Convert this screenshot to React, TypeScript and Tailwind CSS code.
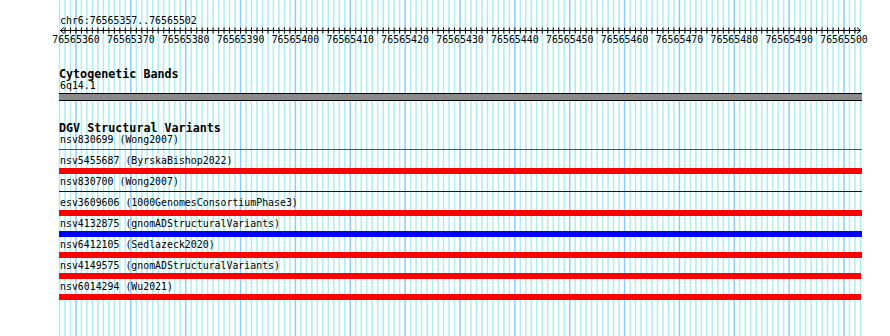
import React from "react";

const START = 76565357;
const COUNT = 146;
const X0 = 59.5;
const PX = 5.486;

const xAt = (k: number) => X0 + k * PX;

const features: { label: string; kind: "line" | "bar"; color: string; width: number }[] = [
  { label: "nsv830699 (Wong2007)", kind: "line", color: "#8b4513", width: 803 },
  { label: "nsv5455687 (ByrskaBishop2022)", kind: "bar", color: "#ff0000", width: 803 },
  { label: "nsv830700 (Wong2007)", kind: "line", color: "#0000b0", width: 803 },
  { label: "esv3609606 (1000GenomesConsortiumPhase3)", kind: "bar", color: "#ff0000", width: 803 },
  { label: "nsv4132875 (gnomADStructuralVariants)", kind: "bar", color: "#0000ff", width: 803 },
  { label: "nsv6412105 (Sedlazeck2020)", kind: "bar", color: "#ff0000", width: 803 },
  { label: "nsv4149575 (gnomADStructuralVariants)", kind: "bar", color: "#ff0000", width: 802 },
  { label: "nsv6014294 (Wu2021)", kind: "bar", color: "#ff0000", width: 802 },
];

const Grid: React.FC = () => {
  const lines = [];
  for (let k = 0; k <= COUNT; k++) {
    const major = (START + k) % 10 === 0;
    lines.push(
      <line
        key={k}
        x1={xAt(k)}
        x2={xAt(k)}
        y1={0}
        y2={336}
        stroke={major ? "#87cefa" : "#aeeeee"}
        strokeWidth={1.5}
      />
    );
  }
  return (
    <svg className="absolute inset-0" width={890} height={336}>
      {lines}
    </svg>
  );
};

const Ruler: React.FC = () => {
  const ticks = [];
  for (let k = 1; k < COUNT; k++) {
    ticks.push(<line key={k} x1={xAt(k)} x2={xAt(k)} y1={0.5} y2={6.5} />);
  }
  return (
    <svg width={890} height={7} className="block" stroke="black" strokeWidth={1} fill="none">
      <line x1={60} x2={861} y1={3.5} y2={3.5} />
      <polyline points="64,0.5 60.5,3.5 64,6.5" />
      <polyline points="857,0.5 860.5,3.5 857,6.5" />
      {ticks}
    </svg>
  );
};

export default function App() {
  const labels = [];
  for (let p = 76565360; p <= 76565500; p += 10) labels.push(p);

  return (
    <div className="relative w-[890px] h-[336px] bg-white overflow-hidden text-black font-['DejaVu_Sans_Mono',monospace]">
      <Grid />
      <div className="relative flex flex-col">
        <div className="mt-[15px] pl-[60px] h-[12px] leading-[12px] text-[9.9px]">chr6:76565357..76565502</div>
        <Ruler />
        <div className="flex pl-[48.57px] h-[12px] leading-[12px] text-[9.9px]">
          {labels.map((p) => (
            <div key={p} className="w-[54.86px] shrink-0 text-center">
              {p}
            </div>
          ))}
        </div>

        <div className="mt-[23px] pl-[59px] h-[11px] leading-[11px] text-[11.7px] font-bold">Cytogenetic Bands</div>
        <div className="pl-[60px] h-[11px] leading-[11px] text-[9.9px]">6q14.1</div>
        <div className="mt-[2px] ml-[59px] w-[803px] h-[8px] border-y border-black bg-[#8b8b8b]" />

        <div className="mt-[22px] pl-[59px] h-[11px] leading-[11px] text-[11.7px] font-bold">DGV Structural Variants</div>
        <div className="flex flex-col">
          {features.map((f) => (
            <div key={f.label} className="flex flex-col h-[21px] pl-[59px]">
              <div className="pl-[1px] h-[12px] leading-[12px] text-[9.9px] whitespace-nowrap">{f.label}</div>
              <div className="mt-[1px] h-[6px] flex flex-col">
                {f.kind === "bar" ? (
                  <div className="h-[6px]" style={{ width: f.width, background: f.color }} />
                ) : (
                  <div className="mt-[2px] h-[1px]" style={{ width: f.width, background: f.color }} />
                )}
              </div>
            </div>
          ))}
        </div>
      </div>
    </div>
  );
}
